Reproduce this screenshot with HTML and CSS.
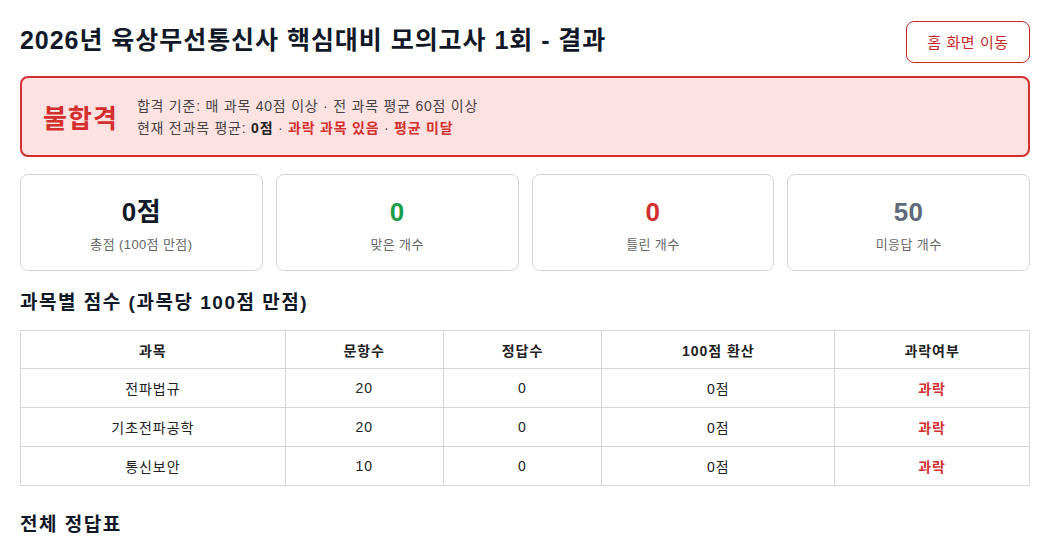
FILE: index.html
```html
<!DOCTYPE html>
<html lang="ko">
<head>
  <meta charset="UTF-8">
  <title>모의고사 결과</title>
  <link rel="stylesheet" href="styles.css">
</head>
<body>
<div class="page">
  <header class="top">
    <h1>2026년 육상무선통신사 핵심대비 모의고사 1회 - 결과</h1>
    <button class="home-btn">홈 화면 이동</button>
  </header>

  <div class="verdict fail">
    <div class="verdict-label">불합격</div>
    <div class="verdict-info">
      <div>합격 기준: 매 과목 40점 이상 · 전 과목 평균 60점 이상</div>
      <div>현재 전과목 평균: <b>0점</b> · <b class="red">과락 과목 있음</b> · <b class="red">평균 미달</b></div>
    </div>
  </div>

  <div class="stats">
    <div class="stat">
      <div class="stat-num">0점</div>
      <div class="stat-label">총점 (100점 만점)</div>
    </div>
    <div class="stat">
      <div class="stat-num green">0</div>
      <div class="stat-label">맞은 개수</div>
    </div>
    <div class="stat">
      <div class="stat-num red">0</div>
      <div class="stat-label">틀린 개수</div>
    </div>
    <div class="stat">
      <div class="stat-num gray">50</div>
      <div class="stat-label">미응답 개수</div>
    </div>
  </div>

  <h2>과목별 점수 (과목당 100점 만점)</h2>
  <table class="score-table">
    <thead>
    <tr>
      <th class="c1">과목</th>
      <th class="c2">문항수</th>
      <th class="c3">정답수</th>
      <th class="c4">100점 환산</th>
      <th class="c5">과락여부</th>
    </tr>
    </thead>
    <tbody>
    <tr>
      <td>전파법규</td>
      <td>20</td>
      <td>0</td>
      <td>0점</td>
      <td class="red bold">과락</td>
    </tr>
    <tr>
      <td>기초전파공학</td>
      <td>20</td>
      <td>0</td>
      <td>0점</td>
      <td class="red bold">과락</td>
    </tr>
    <tr>
      <td>통신보안</td>
      <td>10</td>
      <td>0</td>
      <td>0점</td>
      <td class="red bold">과락</td>
    </tr>
    </tbody>
  </table>

  <h2 class="answers-title">전체 정답표</h2>
</div>
</body>
</html>
```

FILE: styles.css
```css
* {
  margin: 0;
  padding: 0;
  box-sizing: border-box;
}

body {
  font-family: "Liberation Sans", "Noto Sans CJK KR", sans-serif;
  color: #1f2937;
  background: #fff;
  letter-spacing: 0.06em;
}

.page {
  padding: 20px 20px;
}

.top {
  display: flex;
  justify-content: space-between;
  align-items: center;
  height: 42px;
}

h1 {
  font-size: 25px;
  font-weight: bold;
  color: #111827;
  margin-top: -6px;
}

.home-btn {
  font-family: inherit;
  font-size: 15px;
  letter-spacing: 0.04em;
  color: #c62828;
  background: #fff;
  border: 1px solid #c62828;
  border-radius: 8px;
  width: 124px;
  height: 42px;
  margin-top: 1px;
}

.verdict {
  display: flex;
  align-items: center;
  gap: 19px;
  margin-top: 14px;
  height: 81px;
  padding: 0 21px;
  border-radius: 8px;
}

.verdict.fail {
  background: #fde2e2;
  border: 2px solid #d32f2f;
}

.verdict-label {
  font-size: 26px;
  font-weight: bold;
  color: #d32f2f;
  letter-spacing: 0.04em;
}

.verdict-info {
  font-size: 14px;
  line-height: 22px;
  color: #444;
  margin-top: 1px;
  letter-spacing: 0.055em;
}

.verdict-info b {
  color: #222;
}

.verdict-info b.red {
  color: #d32f2f;
}

.stats {
  display: grid;
  grid-template-columns: repeat(4, 1fr);
  gap: 13px;
  margin-top: 17px;
}

.stat {
  border: 1px solid #d6d6d6;
  border-radius: 8px;
  height: 97px;
  display: flex;
  flex-direction: column;
  align-items: center;
  padding-top: 21px;
}

.stat-num {
  font-size: 26px;
  font-weight: bold;
  color: #111827;
  line-height: 32px;
  letter-spacing: 0.02em;
}

.stat-label {
  font-size: 13px;
  color: #666;
  margin-top: 6px;
  letter-spacing: 0.03em;
}

.green {
  color: #1e9e4a;
}

.red {
  color: #d32f2f;
}

.gray {
  color: #5f6b7a;
}

.bold {
  font-weight: bold;
}

h2 {
  font-size: 19px;
  font-weight: bold;
  color: #111827;
  margin-top: 20px;
  line-height: 24px;
  letter-spacing: 0.08em;
}

.score-table {
  width: 100%;
  border-collapse: collapse;
  margin-top: 15px;
  font-size: 14px;
  color: #222;
}

.score-table th,
.score-table td {
  border: 1px solid #d6d6d6;
  text-align: center;
  height: 39px;
  padding: 0 10px;
}

.score-table th {
  height: 38px;
  font-weight: bold;
  color: #222;
}

.c1 { width: 265px; }
.c2 { width: 158px; }
.c3 { width: 159px; }
.c4 { width: 233px; }
.c5 { width: 195px; }

.answers-title {
  margin-top: 27px;
}
```
